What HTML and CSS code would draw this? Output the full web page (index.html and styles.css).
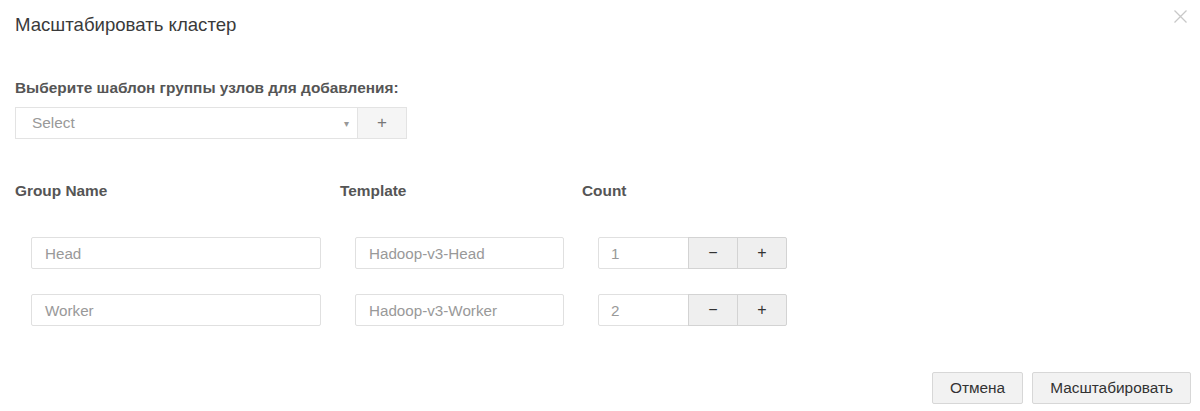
FILE: index.html
```html
<!DOCTYPE html>
<html lang="ru">
<head>
<meta charset="utf-8">
<title>Масштабировать кластер</title>
<link rel="stylesheet" href="styles.css">
</head>
<body>
<div class="modal">
  <div class="modal-header">
    <h4 class="title">Масштабировать кластер</h4>
    <button class="close" type="button" aria-label="Close">
      <svg width="13" height="13" viewBox="0 0 13 13"><path d="M0.5 0.5 L12.5 12.5 M12.5 0.5 L0.5 12.5" stroke="#c8c8c8" stroke-width="1.3" fill="none"/></svg>
    </button>
  </div>

  <div class="modal-body">
    <label class="section-label">Выберите шаблон группы узлов для добавления:</label>
    <div class="select-row">
      <div class="select">
        <span class="select-text">Select</span>
        <span class="caret">▾</span>
      </div>
      <button class="btn add-btn" type="button">+</button>
    </div>

    <div class="grid">
      <div class="col-head">Group Name</div>
      <div class="col-head">Template</div>
      <div class="col-head">Count</div>

      <div class="cell cell-name"><div class="input w-name">Head</div></div>
      <div class="cell cell-tpl"><div class="input w-tpl">Hadoop-v3-Head</div></div>
      <div class="cell counter">
        <div class="input w-count">1</div>
        <button class="btn step" type="button">−</button>
        <button class="btn step" type="button">+</button>
      </div>

      <div class="cell cell-name"><div class="input w-name">Worker</div></div>
      <div class="cell cell-tpl"><div class="input w-tpl">Hadoop-v3-Worker</div></div>
      <div class="cell counter">
        <div class="input w-count">2</div>
        <button class="btn step" type="button">−</button>
        <button class="btn step" type="button">+</button>
      </div>
    </div>
  </div>

  <div class="modal-footer">
    <button class="btn footer-btn" type="button">Отмена</button>
    <button class="btn footer-btn" type="button">Масштабировать</button>
  </div>
</div>
</body>
</html>
```

FILE: styles.css
```css
* { box-sizing: border-box; }

html, body {
  margin: 0;
  padding: 0;
  background: #fff;
}

body {
  font-family: "Liberation Sans", Arial, sans-serif;
  color: #333;
  width: 1200px;
  height: 411px;
  overflow: hidden;
}

.modal {
  padding: 13px 9px 0 15px;
}

.modal-header {
  display: flex;
  justify-content: space-between;
  align-items: flex-start;
}

.title {
  margin: 0;
  font-size: 18.6px;
  line-height: 24px;
  font-weight: normal;
  color: #3a3a3a;
}

.close {
  border: 0;
  background: none;
  padding: 0;
  margin: -3px 4px 0 0;
  width: 13px;
  height: 13px;
  line-height: 0;
  cursor: pointer;
}

.modal-body {
  margin-top: 41px;
}

.section-label {
  display: block;
  font-size: 15.4px;
  line-height: 20px;
  font-weight: bold;
  color: #555;
}

.select-row {
  display: flex;
  margin-top: 9px;
}

.select {
  width: 342px;
  height: 32px;
  border: 1px solid #e3e3e3;
  border-right: 0;
  display: flex;
  align-items: center;
  justify-content: space-between;
  padding: 0 8px 0 16px;
}

.select-text {
  font-size: 15.4px;
  color: #999;
}

.caret {
  font-size: 10px;
  color: #999;
}

.btn {
  font-family: "Liberation Sans", Arial, sans-serif;
  background: #f3f3f3;
  border: 1px solid #d9d9d9;
  color: #555;
  height: 32px;
  padding: 0;
  font-size: 15px;
}

.add-btn {
  width: 50px;
  background: #f5f5f5;
  border-color: #e3e3e3;
  color: #777;
  font-size: 17px;
}

.grid {
  display: grid;
  grid-template-columns: 325px 242px 1fr;
  margin-top: 42px;
}

.col-head {
  font-size: 15.4px;
  line-height: 20px;
  font-weight: bold;
  color: #555;
  margin-bottom: 36px;
}

.cell {
  margin-bottom: 25px;
  display: flex;
}

.cell-name { padding-left: 16px; }
.cell-tpl { padding-left: 15px; }
.counter { padding-left: 16px; }

.input {
  height: 32px;
  border: 1px solid #e0e0e0;
  border-radius: 2px;
  padding: 0 13px;
  display: flex;
  align-items: center;
  font-size: 15.2px;
  color: #999;
}

.w-name { width: 290px; }
.w-tpl { width: 209px; }
.w-count {
  width: 91px;
  border-radius: 2px 0 0 2px;
  padding-left: 12px;
}

.step {
  width: 50px;
  background: #efefef;
  border-color: #d3d3d3;
  margin-left: -1px;
  color: #333;
  font-size: 16px;
}

.step:last-child {
  border-radius: 0 2px 2px 0;
}

.modal-footer {
  display: flex;
  justify-content: flex-end;
  gap: 9px;
  margin-top: 21px;
}

.footer-btn {
  height: 32px;
  padding: 0 17px;
  background: #f2f2f2;
  border: 1px solid #d7d7d7;
  border-radius: 2px;
  color: #333;
  font-size: 15.4px;
}
```
